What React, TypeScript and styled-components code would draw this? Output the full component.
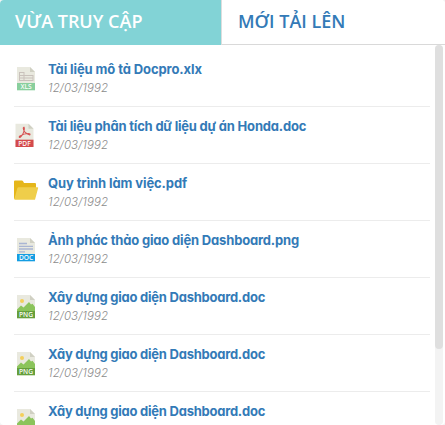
import React from "react";
import styled, { createGlobalStyle } from "styled-components";

const GlobalStyle = createGlobalStyle`
  * { box-sizing: border-box; }
  html, body { margin: 0; overflow: hidden; background: #f3f3f3; }
`;

const Panel = styled.main`
  width: 445px;
  height: 425px;
  display: flex;
  flex-direction: column;
  overflow: hidden;
  background: #fff;
  border-radius: 4px;
`;

const Tabs = styled.nav`
  display: flex;
  height: 45px;
  flex: none;
`;

const Tab = styled.button<{ $active?: boolean }>`
  width: ${(p) => (p.$active ? "222px" : "223px")};
  height: 45px;
  padding: ${(p) => (p.$active ? "0 0 3px 15px" : "0 0 2px 16px")};
  border: 0;
  border-right: ${(p) => (p.$active ? "1px solid #dddddd" : "0")};
  border-bottom: ${(p) => (p.$active ? "0" : "1px solid #d9d9d9")};
  background: ${(p) => (p.$active ? "#82d3d6" : "#fff")};
  color: ${(p) => (p.$active ? "#fff" : "#337ab7")};
  font: 600 18px/24px "Open Sans", sans-serif;
  text-align: left;
  white-space: nowrap;
`;

const Content = styled.section`
  display: flex;
  flex: 1;
  min-height: 0;
`;

const FileList = styled.ul`
  width: 416px;
  margin: 5px 0 0 14px;
  padding: 0;
  list-style: none;
  overflow: hidden;
`;

const FileRow = styled.li`
  display: flex;
  height: 57px;
  border-bottom: 1px solid #ececec;
`;

const IconCell = styled.span`
  width: 34px;
  flex: none;
  padding-top: 16px;
  svg { display: block; }
`;

const FileTitle = styled.a<{ $spacing: number }>`
  display: block;
  height: 19px;
  color: #337ab7;
  font: 700 13px/19px Inter, sans-serif;
  font-feature-settings: "cv11" 1;
  letter-spacing: ${(p) => p.$spacing}px;
  white-space: nowrap;
`;

const FileInfo = styled.div`
  padding-top: 10px;
`;

const FileDate = styled.time`
  display: block;
  color: #8c8c8c;
  font: italic 300 11.5px/19px Inter, sans-serif;
  letter-spacing: 0.1px;
`;

const ScrollTrack = styled.div`
  width: 8px;
  height: 380px;
  margin-left: 5px;
  border-radius: 4px;
  background: #f3f3f3;
`;

const ScrollThumb = styled.div`
  height: 304px;
  border-radius: 4px;
  background: #dfdfdf;
`;

type Kind = "xls" | "pdf" | "folder" | "doc" | "png";

const bands = { xls: "#89cf9d", pdf: "#d44a4b", doc: "#149de2", png: "#669f3c" };

function FileIcon({ kind }: { kind: Kind }) {
  if (kind === "folder") {
    return (
      <svg width="25" height="24" viewBox="0 0 25 24">
        <path d="M0 17V1.5Q0 .5 1 .5H8Q9 .5 9.5 2L10 3H21Q22 3 22 4.2V8L19 19H1Q0 19 0 18Z" fill="#e5b61a" />
        <path d="M3.3 8.3Q3.6 7.3 4.6 7.3H23.5Q24.5 7.3 24.1 8.3L21 19.7H1Q.1 19.7.4 18.7Z" fill="#efce4a" />
      </svg>
    );
  }
  return (
    <svg width="25" height="26" viewBox="0 0 25 26">
      <g transform={kind === "pdf" ? "translate(1.5 0.7)" : "translate(3 1)"}>
        <path d="M0 0H13L18 5V23H0Z" fill="#e9e9df" />
        <path d="M13 0V5H18Z" fill="#d0d0c3" />
        {kind === "xls" && (
          <path d="M2.5 5.5H7M2.5 8.5H16M2.5 11H16M2.5 13.5H16M2.5 5V14M7 5V14M16 8V14" fill="none" stroke="#c9c1bb" />
        )}
        {kind === "pdf" && (
          <path d="M8.4 3.5Q7.2 3.8 8.3 6.5Q9.4 9.8 14.3 11.2Q15.2 10 12.8 9.8Q8.5 9.8 4.5 12.3Q3 13.7 4.4 13.8Q6.2 13 8.2 8.4Q9.4 4.5 8.4 3.5Z" fill="none" stroke="#d65252" strokeWidth="1.1" />
        )}
        {kind === "doc" && (
          <path d="M2 5.5H10M2 8.3H16M2 11H16M2 13.8H8" stroke="#a9b5d3" strokeWidth="1.3" />
        )}
        {kind === "png" && (
          <>
            <circle cx="5" cy="6" r="2" fill="#f4cf5b" />
            <path d="M0 16V14.5L4 10.5L6.5 12.5L12 7L14 9.5L15.5 8.7L18 12V17H0Z" fill="#8bc45b" />
          </>
        )}
        <rect y="16" width="18" height="7.3" fill={bands[kind]} />
        <text x="9" y="22.1" textAnchor="middle" fill="#fff" fontSize="6.6" fontWeight="500" fontFamily="Noto Sans, sans-serif">
          {kind.toUpperCase()}
        </text>
      </g>
    </svg>
  );
}

const files: { name: string; kind: Kind; spacing: number }[] = [
  { name: "Tài liệu mô tả Docpro.xlx", kind: "xls", spacing: -0.1 },
  { name: "Tài liệu phân tích dữ liệu dự án Honda.doc", kind: "pdf", spacing: -0.2 },
  { name: "Quy trình làm việc.pdf", kind: "folder", spacing: -0.1 },
  { name: "Ảnh phác thảo giao diện Dashboard.png", kind: "doc", spacing: -0.17 },
  { name: "Xây dựng giao diện Dashboard.doc", kind: "png", spacing: -0.24 },
  { name: "Xây dựng giao diện Dashboard.doc", kind: "png", spacing: -0.24 },
  { name: "Xây dựng giao diện Dashboard.doc", kind: "png", spacing: -0.24 },
];

export default function App() {
  return (
    <>
      <GlobalStyle />
      <Panel>
        <Tabs>
          <Tab $active>VỪA TRUY CẬP</Tab>
          <Tab>MỚI TẢI LÊN</Tab>
        </Tabs>
        <Content>
          <FileList>
            {files.map((file, i) => (
              <FileRow key={i}>
                <IconCell><FileIcon kind={file.kind} /></IconCell>
                <FileInfo>
                  <FileTitle $spacing={file.spacing}>{file.name}</FileTitle>
                  <FileDate>12/03/1992</FileDate>
                </FileInfo>
              </FileRow>
            ))}
          </FileList>
          <ScrollTrack><ScrollThumb /></ScrollTrack>
        </Content>
      </Panel>
    </>
  );
}
